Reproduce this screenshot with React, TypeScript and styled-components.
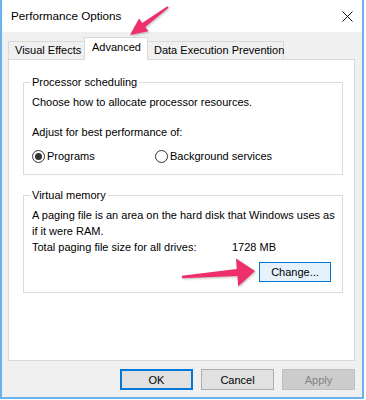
import React from 'react';
import styled, { createGlobalStyle, css } from 'styled-components';

const GlobalStyle = createGlobalStyle`
    html, body {
        margin: 0;
        padding: 0;
        background: #ffffff;
    }
    body {
        font-family: 'Liberation Sans', Arial, sans-serif;
        font-size: 11px;
        color: #000000;
    }
`;

const Window = styled.div`
    position: relative;
    box-sizing: border-box;
    width: 364px;
    height: 399px;
    border: 2px solid #6ab3ec;
    border-top: none;
    display: flex;
    flex-direction: column;
    background: #f0f0f0;
`;

const TitleBar = styled.div`
    height: 32px;
    flex: none;
    display: flex;
    align-items: center;
    justify-content: space-between;
    padding: 0 9px 0 9px;
    background: #ffffff;
`;

const Title = styled.span`
    font-size: 11.7px;
    line-height: 16px;
`;

const CloseIcon = styled.svg`
    width: 11px;
    height: 11px;
    display: block;
`;

const Body = styled.div`
    flex: 1;
    display: flex;
    flex-direction: column;
    padding: 5px 7px 0 6px;
    min-height: 0;
`;

const TabRow = styled.div`
    display: flex;
    align-items: flex-end;
    height: 22px;
    position: relative;
    z-index: 1;
`;

const Tab = styled.div<{ $active?: boolean; $width: number }>`
    box-sizing: border-box;
    width: ${(p) => p.$width}px;
    height: 18px;
    line-height: 17px;
    padding-left: 6px;
    border: 1px solid #d9d9d9;
    border-bottom: none;
    background: #f0f0f0;
    margin-right: -1px;
    white-space: nowrap;

    ${(p) =>
        p.$active &&
        css`
            height: 23px;
            line-height: 18px;
            background: #ffffff;
            margin-bottom: -1px;
            padding-left: 7px;
            position: relative;
            z-index: 2;
        `}
`;

const Panel = styled.div`
    flex: 1;
    background: #ffffff;
    border: 1px solid #d9d9d9;
    padding: 15px 11px 0 14px;
    display: flex;
    flex-direction: column;
`;

const Group = styled.fieldset<{ $gap?: number }>`
    margin: ${(p) => p.$gap ?? 0}px 0 0 0;
    padding: 0 8px 10px 8px;
    border: 1px solid #dcdcdc;
    min-width: 0;
`;

const Legend = styled.legend`
    padding: 0 2px;
    margin-left: -2px;
    line-height: 14px;
`;

const Line = styled.div<{ $gap?: number }>`
    line-height: 15px;
    margin-top: ${(p) => p.$gap ?? 0}px;
    white-space: nowrap;
`;

const RadioRow = styled.div`
    display: grid;
    grid-template-columns: 123px auto;
    margin-top: 8px;
    height: 16px;
    align-items: center;
`;

const RadioLabel = styled.label`
    display: flex;
    align-items: center;
    gap: 2px;
    line-height: 15px;
`;

const RadioCircle = styled.span<{ $checked?: boolean }>`
    box-sizing: border-box;
    width: 13px;
    height: 13px;
    border-radius: 50%;
    border: 1px solid #333333;
    background: #ffffff;
    display: flex;
    align-items: center;
    justify-content: center;

    &::after {
        content: '';
        width: 7px;
        height: 7px;
        border-radius: 50%;
        background: ${(p) => (p.$checked ? '#333333' : 'transparent')};
    }
`;

const Para = styled.div`
    line-height: 16px;
    margin-top: 5px;
    white-space: nowrap;
`;

const SizeRow = styled.div`
    display: grid;
    grid-template-columns: 200px auto;
    line-height: 16px;
`;

const ButtonRow = styled.div<{ $align?: string }>`
    display: flex;
    justify-content: ${(p) => p.$align ?? 'flex-end'};
    gap: 8px;
`;

const ChangeRow = styled(ButtonRow)`
    margin-top: 7px;
    padding-right: 3px;
`;

const Footer = styled(ButtonRow)`
    flex: none;
    padding: 8px 0 7px;
`;

type BtnKind = 'default' | 'normal' | 'disabled' | 'hover';

const Button = styled.button<{ $kind: BtnKind }>`
    box-sizing: border-box;
    width: 73px;
    height: 21px;
    padding: 0;
    font-family: inherit;
    font-size: 11px;
    color: #000000;
    background: #e1e1e1;
    border: 1px solid #adadad;

    ${(p) =>
        p.$kind === 'default' &&
        css`
            border: 2px solid #0078d7;
        `}
    ${(p) =>
        p.$kind === 'disabled' &&
        css`
            background: #cccccc;
            border-color: #bfbfbf;
            color: #838383;
        `}
    ${(p) =>
        p.$kind === 'hover' &&
        css`
            width: 72px;
            height: 20px;
            background: #e5f1fb;
            border-color: #0078d7;
        `}
`;

const Overlay = styled.svg`
    position: absolute;
    left: 0;
    top: 0;
    width: 366px;
    height: 400px;
    pointer-events: none;
    z-index: 5;
    filter: drop-shadow(1px 1px 1px rgba(0, 0, 0, 0.25));
`;

const App: React.FC = () => {
    return (
        <>
            <GlobalStyle />
            <Window>
                <TitleBar>
                    <Title>Performance Options</Title>
                    <CloseIcon viewBox="0 0 11 11">
                        <path d="M0.5 0.5 L10.5 10.5 M10.5 0.5 L0.5 10.5" stroke="#111" strokeWidth="1" />
                    </CloseIcon>
                </TitleBar>
                <Body>
                    <TabRow>
                        <Tab $width={77}>Visual Effects</Tab>
                        <Tab $width={64} $active>
                            Advanced
                        </Tab>
                        <Tab $width={137}>Data Execution Prevention</Tab>
                    </TabRow>
                    <Panel>
                        <Group>
                            <Legend>Processor scheduling</Legend>
                            <Line $gap={6}>Choose how to allocate processor resources.</Line>
                            <Line $gap={15}>Adjust for best performance of:</Line>
                            <RadioRow>
                                <RadioLabel>
                                    <RadioCircle $checked />
                                    Programs
                                </RadioLabel>
                                <RadioLabel>
                                    <RadioCircle />
                                    Background services
                                </RadioLabel>
                            </RadioRow>
                        </Group>
                        <Group $gap={13}>
                            <Legend>Virtual memory</Legend>
                            <Para>
                                A paging file is an area on the hard disk that Windows uses as
                                <br />
                                if it were RAM.
                            </Para>
                            <SizeRow>
                                <span>Total paging file size for all drives:</span>
                                <span>1728 MB</span>
                            </SizeRow>
                            <ChangeRow>
                                <Button $kind="hover">Change...</Button>
                            </ChangeRow>
                        </Group>
                    </Panel>
                    <Footer>
                        <Button $kind="default">OK</Button>
                        <Button $kind="normal">Cancel</Button>
                        <Button $kind="disabled">Apply</Button>
                    </Footer>
                </Body>
                <Overlay viewBox="0 0 366 400">
                    <polygon
                        fill="#ee2f6b"
                        points="165.4,6.2 140.2,22.9 137,18.5 128,35 146.4,31.3 143.2,26.9 166.6,7.8"
                    />
                    <polygon
                        fill="#ee2f6b"
                        points="179.9,275.8 234.8,269 234,258.5 253,271 236.2,286.5 235.4,276 180.1,278.2"
                    />
                </Overlay>
            </Window>
        </>
    );
};

export default App;
